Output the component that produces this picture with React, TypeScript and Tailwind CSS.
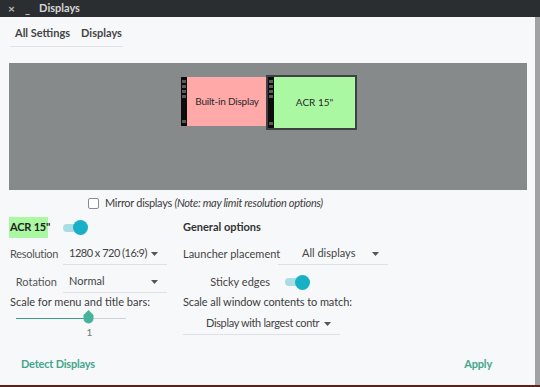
import React from "react";

const font = { fontFamily: 'Lato, "Noto Sans", sans-serif' };

function Strip() {
  return (
    <div className="w-[6px] h-full bg-[#0d0d0d] flex flex-col items-center pt-[3px] pb-[3px]">
      <div className="flex flex-col gap-[2px]">
        <div className="w-[4px] h-[3px] bg-[#5a5a5a]" />
        <div className="w-[4px] h-[3px] bg-[#5a5a5a]" />
        <div className="w-[4px] h-[3px] bg-[#5a5a5a]" />
        <div className="w-[4px] h-[3px] bg-[#5a5a5a]" />
      </div>
      <div className="flex-1" />
      <div className="w-[4px] h-[3px] bg-[#5a5a5a]" />
    </div>
  );
}

function Arrow() {
  return (
    <svg className="shrink-0" width="7" height="4" viewBox="0 0 7 4">
      <path d="M0 0 L7 0 L3.5 4 Z" fill="#555" />
    </svg>
  );
}

function Toggle() {
  return (
    <div className="relative w-[25px] h-[15px] flex items-center shrink-0">
      <div className="w-[20px] h-[8px] rounded-full bg-[#a9dde3]" />
      <div className="absolute right-0 top-0 w-[15px] h-[15px] rounded-full bg-[#17b0c6]" />
    </div>
  );
}

export default function App() {
  return (
    <div className="w-[540px] h-[387px] overflow-hidden flex flex-col bg-[#7d7f80] text-[#3c3c3c] whitespace-nowrap" style={font}>
      {/* title bar */}
      <div className="h-[17px] bg-[#2b2e30] flex items-center text-[11px] font-bold text-[#d6d6d6] shrink-0">
        <span className="ml-[8px] text-[#bbbbbb] text-[12px] leading-none">×</span>
        <span className="ml-[10px] text-[#bbbbbb] leading-none">_</span>
        <span className="ml-[9px]">Displays</span>
      </div>
      <div className="flex flex-1 min-h-0">
        <div className="w-[535px] bg-[#f7f8f9] flex flex-col">
          {/* breadcrumb */}
          <div className="ml-[10px] w-[113px] h-[30px] border-b border-[#e2e3e4] flex items-end pb-[5px] pl-[5px] gap-[11px] text-[11px] font-bold text-[#454545]">
            <span>All Settings</span>
            <span>Displays</span>
          </div>
          {/* canvas */}
          <div className="ml-[9px] mt-[16px] w-[518px] h-[127px] bg-[#878a8b] flex justify-center items-start pt-[12px]">
            <div className="flex items-start pl-[2px]">
              <div className="mt-[2px] h-[49px] flex">
                <Strip />
                <div className="w-[80px] h-full bg-[#ffa9a9] flex items-center justify-center text-[10px] text-[#2a2a2a] tracking-[-0.2px]">
                  Built-in Display
                </div>
              </div>
              <div className="-ml-px h-[55px] border-2 border-[#3c4141] flex">
                <Strip />
                <div className="w-[81px] h-full bg-[#aaf9a2] flex items-center justify-center text-[10px] text-[#2a2a2a]">
                  ACR 15"
                </div>
              </div>
            </div>
          </div>
          {/* mirror */}
          <div className="mt-[8px] ml-[88px] flex items-center h-[11px] text-[11px] text-[#3c3c3c]">
            <div className="w-[11px] h-[11px] border border-[#8a8a8a] rounded-[2px] bg-white shrink-0" />
            <span className="ml-[6px] tracking-[-0.3px]">
              Mirror displays <i>(Note: may limit resolution options)</i>
            </span>
          </div>
          {/* options */}
          <div className="mt-[8px] flex text-[11px]">
            {/* left column */}
            <div className="ml-[9px] w-[174px] shrink-0 flex flex-col">
              <div className="flex items-center h-[21px]">
                <div className="h-[21px] w-[39px] shrink-0 bg-[#aaf9a2] flex items-center pl-[1px] font-bold text-[#222] tracking-[-0.2px]">ACR 15"</div>
                <div className="ml-[15px]"><Toggle /></div>
              </div>
              <div className="mt-[5px] flex items-center h-[22px]">
                <span className="w-[54px] shrink-0 pl-[1px] text-[#555] tracking-[-0.3px]">Resolution</span>
                <div className="w-[104px] shrink-0 h-[22px] border-b border-[#e0e1e2] flex items-center pl-[6px] pr-[9px] text-[#444]">
                  <span className="tracking-[-0.5px]">1280 x 720 (16:9)</span>
                  <div className="flex-1" />
                  <Arrow />
                </div>
              </div>
              <div className="mt-[6px] flex items-center h-[22px]">
                <span className="w-[54px] shrink-0 text-right pr-[6px] text-[#555]">Rotation</span>
                <div className="w-[104px] shrink-0 h-[22px] border-b border-[#e0e1e2] flex items-center pl-[6px] pr-[9px] text-[#444]">
                  <span>Normal</span>
                  <div className="flex-1" />
                  <Arrow />
                </div>
              </div>
              <div className="mt-[1px] pl-[1px] h-[15px] leading-[15px] text-[#3c3c3c]">Scale for menu and title bars:</div>
              <div className="ml-[7px] mt-[3px] w-[110px] h-[12px] flex items-center relative">
                <div className="w-[73px] h-[1px] bg-[#3a9d86]" />
                <div className="flex-1 h-[1px] bg-[#cfd1d2]" />
                <svg className="absolute left-[67px] top-[-2px]" width="11" height="14" viewBox="0 0 11 14">
                  <path d="M5.5 0 L10.5 5 L10.5 8.5 A5 5 0 0 1 0.5 8.5 L0.5 5 Z" fill="#47b39a" />
                </svg>
              </div>
              <div className="ml-[77px] mt-[1px] w-[7px] text-center text-[10px] text-[#777]">1</div>
            </div>
            {/* right column */}
            <div className="flex flex-col">
              <div className="h-[21px] flex items-center font-bold text-[#333]">General options</div>
              <div className="mt-[5px] flex items-center h-[22px]">
                <span className="w-[95px] shrink-0 text-[#444]">Launcher placement</span>
                <div className="w-[110px] shrink-0 h-[22px] border-b border-[#e0e1e2] flex items-center pl-[24px] pr-[9px] text-[#444]">
                  <span>All displays</span>
                  <div className="flex-1" />
                  <Arrow />
                </div>
              </div>
              <div className="mt-[6px] flex items-center h-[22px]">
                <span className="w-[95px] shrink-0 text-right pr-[8px] text-[#444]">Sticky edges</span>
                <div className="ml-[7px]"><Toggle /></div>
              </div>
              <div className="mt-[1px] h-[15px] leading-[15px] text-[#3c3c3c] tracking-[-0.1px]">Scale all window contents to match:</div>
              <div className="mt-[4px] w-[157px] h-[22px] border-b border-[#e0e1e2] flex items-center pl-[23px] pr-[9px] text-[#444]">
                <span className="tracking-[-0.35px]">Display with largest contr</span>
                <div className="flex-1" />
                <Arrow />
              </div>
            </div>
          </div>
          {/* footer */}
          <div className="mt-auto mb-[13px] flex justify-between items-center pl-[21px] pr-[43px] text-[11px] font-bold text-[#43a68c] tracking-[-0.2px]">
            <span>Detect Displays</span>
            <span>Apply</span>
          </div>
        </div>
        <div className="flex-1 bg-[#a0a2a3]" />
      </div>
      <div className="h-[2px] bg-[#5b2418] shrink-0" />
    </div>
  );
}
